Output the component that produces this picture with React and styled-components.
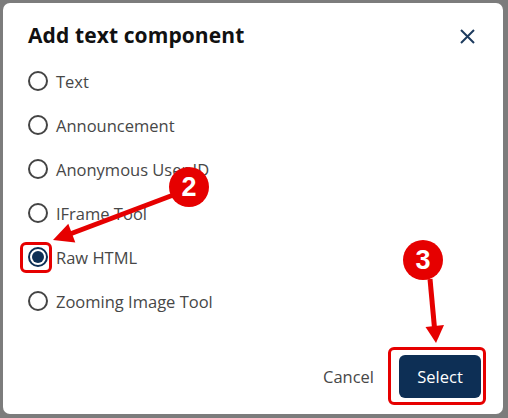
import React from 'react'
import styled, { createGlobalStyle } from 'styled-components'

const GlobalStyle = createGlobalStyle`
  html, body {
    margin: 0;
    padding: 0;
    background: #7c7c7c;
  }
  body {
    font-family: "Open Sans", "Noto Sans", sans-serif;
  }
`;

const Backdrop = styled.div`
  position: relative;
  width: 508px;
  height: 418px;
  box-sizing: border-box;
  padding: 3px 5px 4px 3px;
  background: #7c7c7c;
  overflow: hidden;
`;

const Dialog = styled.div`
  height: 100%;
  box-sizing: border-box;
  background: #fff;
  border-radius: 7px;
  padding: 16px 22px 16px 25px;
  display: flex;
  flex-direction: column;
`;

const Header = styled.div`
  display: flex;
  align-items: center;
  justify-content: space-between;
  height: 32px;
`;

const Title = styled.h2`
  margin: 0;
  font-size: 21px;
  font-weight: 700;
  color: #111;
  letter-spacing: 0.1px;
`;

const CloseButton = styled.button`
  border: 0;
  background: none;
  padding: 0;
  margin-right: 6px;
  margin-top: 2px;
  width: 16px;
  height: 16px;
  display: flex;
  align-items: center;
  justify-content: center;
  cursor: pointer;
`;

const Options = styled.div`
  display: flex;
  flex-direction: column;
  margin-top: 8px;
`;

const Option = styled.label`
  display: flex;
  align-items: center;
  gap: 8px;
  height: 44px;
  font-size: 16.5px;
  color: #474747;
  cursor: pointer;
`;

const Radio = styled.span`
  width: 20px;
  height: 20px;
  box-sizing: border-box;
  border-radius: 50%;
  border: 2px solid ${p => (p.$checked ? '#0d2f55' : '#444')};
  display: flex;
  align-items: center;
  justify-content: center;

  &::after {
    content: '';
    width: 12px;
    height: 12px;
    border-radius: 50%;
    background: ${p => (p.$checked ? '#0d2f55' : 'transparent')};
  }
`;

const Footer = styled.div`
  margin-top: auto;
  display: flex;
  justify-content: flex-end;
  align-items: center;
  gap: 25px;
`;

const CancelButton = styled.button`
  border: 0;
  background: none;
  font-family: inherit;
  font-size: 16.5px;
  color: #474747;
  padding: 0;
  cursor: pointer;
`;

const SelectButton = styled.button`
  border: 0;
  background: #0d2f55;
  color: #fff;
  font-family: inherit;
  font-size: 16.5px;
  width: 82px;
  height: 43px;
  border-radius: 6px;
  cursor: pointer;
`;

/* annotation overlays */
const Highlight = styled.div`
  position: absolute;
  box-sizing: border-box;
  border: 3px solid #e60000;
  border-radius: 6px;
  left: ${p => p.$x}px;
  top: ${p => p.$y}px;
  width: ${p => p.$w}px;
  height: ${p => p.$h}px;
`;

const Badge = styled.div`
  position: absolute;
  left: ${p => p.$x - 20}px;
  top: ${p => p.$y - 20}px;
  width: 40px;
  height: 40px;
  border-radius: 50%;
  background: #e60000;
  color: #fff;
  font-family: "Liberation Sans", Arial, sans-serif;
  font-weight: 700;
  font-size: 27px;
  display: flex;
  align-items: center;
  justify-content: center;
`;

const Arrows = styled.svg`
  position: absolute;
  left: 0;
  top: 0;
  pointer-events: none;
`;

const options = ['Text', 'Announcement', 'Anonymous User ID', 'IFrame Tool', 'Raw HTML', 'Zooming Image Tool'];

export default function App() {
  const selected = 'Raw HTML';
  return (
    <Backdrop>
      <GlobalStyle />
      <Dialog>
        <Header>
          <Title>Add text component</Title>
          <CloseButton aria-label="Close">
            <svg width="15" height="15" viewBox="0 0 15 15">
              <path d="M1 1L14 14M14 1L1 14" stroke="#1d3b5e" strokeWidth="2" />
            </svg>
          </CloseButton>
        </Header>
        <Options>
          {options.map(o => (
            <Option key={o}>
              <Radio $checked={o === selected} />
              {o}
            </Option>
          ))}
        </Options>
        <Footer>
          <CancelButton>Cancel</CancelButton>
          <SelectButton>Select</SelectButton>
        </Footer>
      </Dialog>

      <Arrows width="508" height="418">
        <g stroke="#e60000" strokeWidth="5" fill="#e60000">
          <line x1="176" y1="194" x2="70" y2="234" />
          <line x1="430" y1="279" x2="434.5" y2="328" />
        </g>
        <g fill="#e60000">
          <polygon points="53,240 75.3,242.5 68.3,223.7" />
          <polygon points="436,343 444,325 425.5,327" />
        </g>
      </Arrows>
      <Highlight $x={20} $y={242} $w={32} $h={31} />
      <Highlight $x={388} $y={347} $w={98} $h={58} />
      <Badge $x={189} $y={187}>2</Badge>
      <Badge $x={423} $y={260}>3</Badge>
    </Backdrop>
  )
}
